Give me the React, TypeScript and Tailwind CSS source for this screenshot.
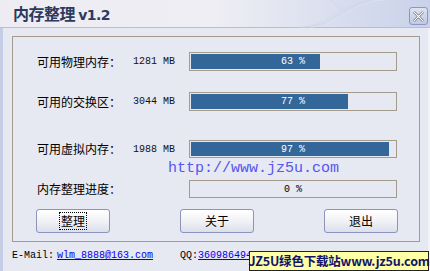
import React from "react";

const mono = { fontFamily: '"Liberation Mono", "DejaVu Sans Mono", monospace' };

function Bar({ pct, dark }: { pct: number; dark?: boolean }) {
  return (
    <div className="relative w-[208px] h-full border border-[#a39b8c] bg-[#e6e8f2] p-[1px]">
      <div className="h-full bg-[#336699]" style={{ width: `${pct}%` }} />
      <div
        className={`absolute inset-0 flex items-center justify-center text-[10px] ${dark ? "text-black" : "text-white"}`}
        style={mono}
      >
        {pct} %
      </div>
    </div>
  );
}

function Row({ label, value, pct, className }: { label: string; value?: string; pct: number; className: string }) {
  return (
    <div className={`flex items-center ${className}`}>
      <div className="w-[120px] pl-[24px] text-[12px] text-black whitespace-nowrap">{label}</div>
      <div className="w-[56px] text-[10px] text-[#111]" style={mono}>
        {value}
      </div>
      <Bar pct={pct} dark={pct === 0} />
    </div>
  );
}

function Btn({ text, focus }: { text: string; focus?: boolean }) {
  return (
    <button className="w-[74px] h-[24px] rounded-[3px] border border-[#8a94bf] bg-gradient-to-b from-[#ffffff] via-[#f2f2f6] to-[#dcdfea] flex items-center justify-center text-[12px] text-black">
      <span className={focus ? "outline outline-1 outline-dotted outline-black px-[1px] leading-[16px]" : "leading-[16px]"}>
        {text}
      </span>
    </button>
  );
}

export default function App() {
  return (
    <div
      className="relative w-[430px] h-[271px] bg-[#e6e8f2] flex flex-col overflow-hidden"
      style={{ fontFamily: '"Noto Sans CJK SC", "Liberation Sans", sans-serif' }}
    >
      <div className="h-[28px] flex items-center justify-between pl-[13px] pr-[2px] bg-gradient-to-r from-[#ececf2] via-[#eeeef4] to-[#c9d2ea] border-b border-[#b3bedc] relative">
        <svg className="absolute left-[300px] top-0" width="110" height="28" viewBox="0 0 110 28">
          <path d="M0 27 C30 27 40 0 75 0" stroke="#d6dbea" strokeWidth="1" fill="none" />
          <path d="M5 27 C35 27 45 0 80 0" stroke="#d0d6e8" strokeWidth="1" fill="none" />
          <path d="M10 27 C40 27 50 0 85 0" stroke="#dde1ee" strokeWidth="1" fill="none" />
          <path d="M30 0 C45 10 50 20 60 27" stroke="#d3d9ea" strokeWidth="1" fill="none" />
        </svg>
        <div className="relative text-[16px] font-bold text-[#2b3a5e] tracking-[-0.5px]">
          内存整理 <span className="text-[14px]" style={{ fontFamily: '"DejaVu Sans", sans-serif' }}>v1.2</span>
        </div>
        <div className="relative w-[19px] h-[18px] mt-[5px] rounded-[3px] border border-[#8c98c2] bg-gradient-to-b from-[#dde3f2] to-[#bfc9e4] flex items-center justify-center">
          <svg width="13" height="13" viewBox="0 0 13 13">
            <path d="M2 2 L11 11 M11 2 L2 11" stroke="#5a4a4a" strokeWidth="2.4" />
            <path d="M2 2 L11 11 M11 2 L2 11" stroke="#ffffff" strokeWidth="1.2" />
          </svg>
        </div>
      </div>

      <div className="flex-1 flex flex-col border-l-[3px] border-[#c5cde6] border-r-[2px] border-r-[#f2f3f8]">
        <div className="ml-[9px] mt-[8px] w-[408px] h-[206px] border border-[#a39b8c] flex flex-col">
          <Row label="可用物理内存：" value="1281 MB" pct={63} className="mt-[15px] h-[19px]" />
          <Row label="可用的交换区：" value="3044 MB" pct={77} className="mt-[21px] h-[19px]" />
          <Row label="可用虚拟内存：" value="1988 MB" pct={97} className="mt-[29px] h-[18px]" />
          <div className="h-[22px] flex items-center pl-[155px] text-[15px] text-[#5555f0]" style={{ fontFamily: '"Liberation Mono", monospace' }}>
            http://www.jz5u.com
          </div>
          <Row label="内存整理进度：" pct={0} className="h-[18px]" />
          <div className="flex mt-[11px] ml-[23px] gap-[70px]">
            <Btn text="整理" focus />
            <Btn text="关于" />
            <Btn text="退出" />
          </div>
        </div>
        <div className="flex items-center h-[27px] pl-[9px] text-[10px] text-black" style={mono}>
          <span>E-Mail:</span>
          <span className="ml-[3px] text-[#0000ee] underline">wlm_8888@163.com</span>
          <span className="ml-[27px]">QQ:</span>
          <span className="text-[#0000ee] underline">360986494</span>
        </div>
      </div>

      <div className="absolute left-[249px] top-[251px] w-[180px] h-[20px] bg-[#ffffa6] border border-[#222] flex items-center justify-center text-[12.5px] font-bold text-[#12146a] tracking-[-0.2px] whitespace-nowrap">
        JZ5U绿色下载站www.jz5u.com
      </div>
    </div>
  );
}
